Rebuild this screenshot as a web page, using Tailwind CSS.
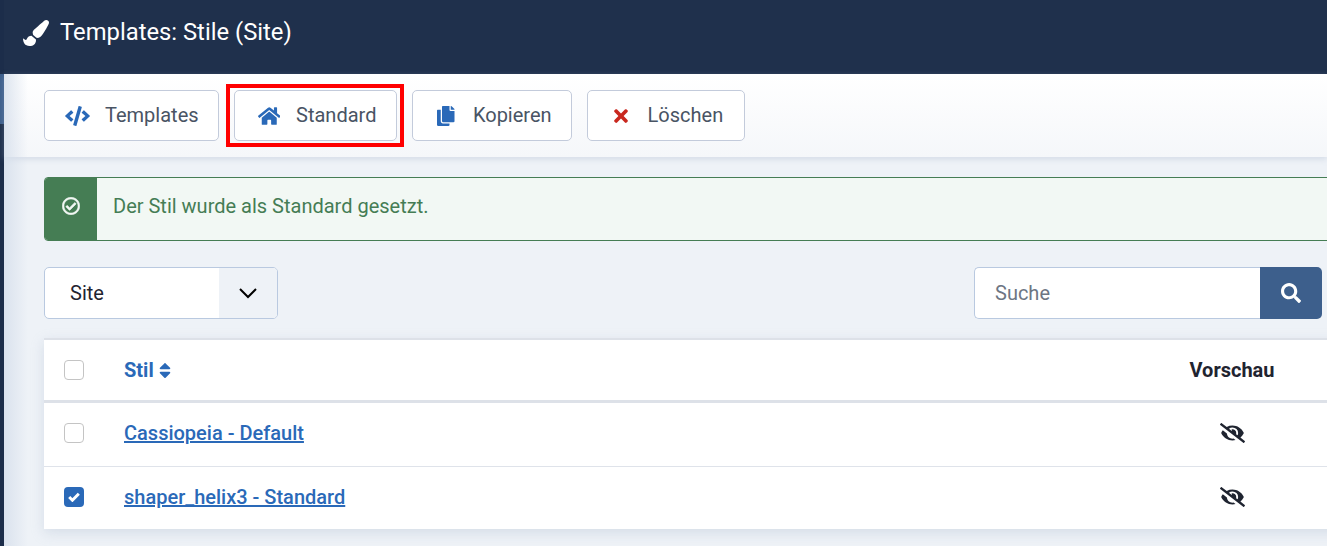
<!DOCTYPE html>
<html lang="de">

<head>
  <meta charset="UTF-8">
  <meta name="viewport" content="width=device-width, initial-scale=1.0">
  <title>Templates: Stile (Site)</title>
  <script src="https://cdn.jsdelivr.net/npm/@tailwindcss/browser@4"></script>
</head>

<body class="h-[546px] overflow-hidden bg-[#eef2f7] font-['Roboto',sans-serif]">
  <div class="flex h-[546px] overflow-hidden">

    <!-- sidebar strip -->
    <div class="w-[4px] shrink-0 bg-[#1c2d4a] flex flex-col">
      <div class="h-[74px]"></div>
      <div class="h-[50px] bg-[#3d5f8c]"></div>
    </div>

    <div class="relative flex-1 min-w-0">
      <!-- header -->
      <header class="h-[74px] bg-[#1f304c] flex items-center pl-[19px] pb-[9px] gap-[11px] text-white">
        <svg class="w-[26px] h-[26px] fill-white" viewBox="0 0 512 512"><path d="M167.02 309.34c-40.12 2.58-76.53 17.86-97.19 72.3-2.35 6.21-8 9.98-14.59 9.98-11.11 0-45.46-27.67-55.25-34.35C0 439.62 37.93 512 128 512c75.86 0 128-43.77 128-120.19 0-3.11-.65-6.08-.97-9.13l-88.01-73.34zM457.89 0c-15.16 0-29.37 6.71-40.21 16.45C213.27 199.05 192 203.34 192 257.09c0 13.7 3.25 26.76 8.73 38.7l63.82 53.18c7.21 1.8 14.64 3.03 22.39 3.03 62.11 0 98.11-45.47 211.16-256.46 7.38-14.35 13.9-29.85 13.9-45.99C512 20.64 486 0 457.89 0z"/></svg>
        <h1 class="text-[23.8px] leading-none">Templates: Stile (Site)</h1>
      </header>

      <!-- toolbar -->
      <div class="relative h-[83px] bg-gradient-to-b from-white to-[#f5f7fa] shadow-[0_2px_6px_rgba(160,175,200,0.35)] pl-[40px] pt-[16px] flex items-start gap-[15px] text-[20px] text-[#495464]">
        <button class="h-[51px] flex items-center gap-[15px] pl-[20px] pr-[19px] bg-white border border-[#c3cbdb] rounded-[5px]">
          <svg class="w-[25px] h-[20px] fill-[#2a69b8]" viewBox="0 0 640 512"><path d="M278.9 511.5l-61-17.7c-6.4-1.8-10-8.5-8.2-14.9L346.2 8.7c1.8-6.4 8.5-10 14.9-8.2l61 17.7c6.4 1.8 10 8.5 8.2 14.9L293.8 503.3c-1.9 6.4-8.5 10.1-14.9 8.2zm-114-112.2l43.5-46.4c4.6-4.9 4.3-12.7-.8-17.2L117 256l90.6-79.7c5.1-4.5 5.5-12.3.8-17.2l-43.5-46.4c-4.5-4.8-12.1-5.1-17-.5L3.8 247.2c-5.1 4.7-5.1 12.8 0 17.5l144.1 135.1c4.9 4.6 12.5 4.4 17-.5zm327.2.6l144.1-135.1c5.1-4.7 5.1-12.8 0-17.5L492.1 112.1c-4.8-4.5-12.4-4.3-17 .5L431.6 159c-4.6 4.9-4.3 12.7.8 17.2L523 256l-90.6 79.7c-5.1 4.5-5.5 12.3-.8 17.2l43.5 46.4c4.5 4.9 12.1 5.1 17 .6z"/></svg>
          <span class="-mt-[2px]">Templates</span>
        </button>
        <div class="relative">
          <button class="h-[51px] flex items-center gap-[16px] pl-[23px] pr-[20px] bg-white border border-[#c3cbdb] rounded-[5px]">
            <svg class="w-[22.5px] h-[20px] fill-[#2a69b8]" viewBox="0 0 576 512"><path d="M280.37 148.26L96 300.11V464a16 16 0 0 0 16 16l112.06-.29a16 16 0 0 0 15.92-16V368a16 16 0 0 1 16-16h64a16 16 0 0 1 16 16v95.64a16 16 0 0 0 16 16.05L464 480a16 16 0 0 0 16-16V300L295.67 148.26a12.19 12.19 0 0 0-15.3 0zM571.6 251.47L488 182.56V44.05a12 12 0 0 0-12-12h-56a12 12 0 0 0-12 12v72.61L318.47 43a48 48 0 0 0-61 0L4.34 251.47a12 12 0 0 0-1.6 16.9l25.5 31A12 12 0 0 0 45.15 301l235.22-193.74a12.19 12.19 0 0 1 15.3 0L530.9 301a12 12 0 0 0 16.9-1.6l25.5-31a12 12 0 0 0-1.7-16.93z"/></svg>
            <span class="-mt-[2px]">Standard</span>
          </button>
          <!-- red annotation box -->
          <div class="absolute -left-[8px] -top-[6px] -right-[7px] -bottom-[6px] border-[4px] border-[#ff0000] pointer-events-none"></div>
        </div>
        <button class="h-[51px] flex items-center gap-[18px] pl-[24px] pr-[19px] bg-white border border-[#c3cbdb] rounded-[5px]">
          <svg class="w-[17.5px] h-[20px] fill-[#2a69b8]" viewBox="0 0 448 512"><path d="M320 448v40c0 13.255-10.745 24-24 24H24c-13.255 0-24-10.745-24-24V120c0-13.255 10.745-24 24-24h72v296c0 30.879 25.121 56 56 56h168zm0-344V0H152c-13.255 0-24 10.745-24 24v368c0 13.255 10.745 24 24 24h272c13.255 0 24-10.745 24-24V128H344c-13.2 0-24-10.8-24-24zm120.971-31.029L375.029 7.029A24 24 0 0 0 358.059 0H352v96h96v-6.059a24 24 0 0 0-7.029-16.97z"/></svg>
          <span class="-mt-[2px]">Kopieren</span>
        </button>
        <button class="h-[51px] flex items-center gap-[20px] pl-[26px] pr-[21px] bg-white border border-[#c3cbdb] rounded-[5px]">
          <svg class="w-[14px] h-[20px] fill-[#c9281f]" viewBox="0 0 352 512"><path d="M242.72 256l100.07-100.07c12.28-12.28 12.28-32.19 0-44.48l-22.24-22.24c-12.28-12.28-32.19-12.28-44.48 0L176 189.28 75.93 89.21c-12.28-12.28-32.19-12.28-44.48 0L9.21 111.45c-12.28 12.28-12.28 32.19 0 44.48L109.28 256 9.21 356.07c-12.28 12.28-12.28 32.19 0 44.48l22.24 22.24c12.28 12.28 32.2 12.28 44.48 0L176 322.72l100.07 100.07c12.28 12.28 32.2 12.28 44.48 0l22.24-22.24c12.28-12.28 12.28-32.19 0-44.48L242.72 256z"/></svg>
          <span class="-mt-[2px]">Löschen</span>
        </button>
      </div>

      <main class="pl-[40px] pt-[20px]">
        <!-- success message -->
        <div class="w-[1300px] h-[64px] flex rounded-[4px] border border-[#457d54] bg-[#f2f8f4] overflow-hidden">
          <div class="w-[52px] shrink-0 pb-[6px] bg-[#457d54] flex items-center justify-center">
            <svg class="w-[18px] h-[18px] fill-[#f2f8f4] stroke-[#f2f8f4] stroke-[16px]" viewBox="0 0 512 512"><path d="M256 8C119.033 8 8 119.033 8 256s111.033 248 248 248 248-111.033 248-248S392.967 8 256 8zm0 48c110.532 0 200 89.451 200 200 0 110.532-89.451 200-200 200-110.532 0-200-89.451-200-200 0-110.532 89.451-200 200-200m140.204 130.267l-22.536-22.718c-4.667-4.705-12.265-4.736-16.97-.068L215.346 303.697l-59.792-60.277c-4.667-4.705-12.265-4.736-16.97-.069l-22.719 22.536c-4.705 4.667-4.736 12.265-.068 16.971l90.781 91.516c4.667 4.705 12.265 4.736 16.97.068l172.589-171.204c4.704-4.668 4.734-12.266.067-16.971z"/></svg>
          </div>
          <p class="pl-[16px] pb-[6px] self-center text-[20px] text-[#457d54]">Der Stil wurde als Standard gesetzt.</p>
        </div>

        <!-- filters -->
        <div class="mt-[26px] flex justify-between w-[1278px] text-[20px]">
          <div class="w-[234px] h-[52px] flex bg-white border border-[#b9c9e0] rounded-[5px] overflow-hidden">
            <div class="flex-1 pl-[25px] flex items-center text-[#1f2430]">Site</div>
            <div class="w-[58px] bg-[#eef2f7] flex items-center justify-center">
              <svg class="w-[18px] h-[11px] fill-none stroke-black stroke-[2px]" viewBox="0 0 18 11"><path d="M1 1l8 8 8-8"/></svg>
            </div>
          </div>
          <div class="w-[348px] h-[52px] flex">
            <div class="flex-1 pl-[20px] flex items-center bg-white border border-r-0 border-[#b9c9e0] rounded-l-[5px] text-[#6d7683]">Suche</div>
            <div class="w-[62px] bg-[#3d5f8c] rounded-r-[5px] flex items-center justify-center">
              <svg class="w-[20px] h-[20px] fill-white" viewBox="0 0 512 512"><path d="M505 442.7L405.3 343c-4.5-4.5-10.6-7-17-7H372c27.6-35.3 44-79.7 44-128C416 93.1 322.9 0 208 0S0 93.1 0 208s93.1 208 208 208c48.3 0 92.7-16.4 128-44v16.3c0 6.4 2.5 12.5 7 17l99.7 99.7c9.4 9.4 24.6 9.4 33.9 0l28.3-28.3c9.4-9.4 9.4-24.6.1-34zM208 336c-70.7 0-128-57.2-128-128 0-70.7 57.2-128 128-128 70.7 0 128 57.2 128 128 0 70.7-57.2 128-128 128z"/></svg>
            </div>
          </div>
        </div>

        <!-- styles table -->
        <div class="mt-[19px] w-[1300px] bg-white border-t-2 border-[#dde1e8] shadow-[0_4px_12px_rgba(160,175,200,0.3)] text-[20px]">
          <div class="h-[63px] flex items-center border-b-[3px] border-[#dde1e8] font-bold">
            <div class="w-[80px] pl-[20px]"><span class="block w-[20px] h-[20px] bg-white border border-[#c4c4c4] rounded-[4px]"></span></div>
            <div class="flex-1 flex items-center gap-[5px] text-[#2a69b8]">
              <span>Stil</span>
              <svg class="w-[12px] h-[19px] fill-[#2a69b8]" viewBox="0 0 320 512"><path d="M41 288h238c21.4 0 32.1 25.9 17 41L177 448c-9.4 9.4-24.6 9.4-33.9 0L24 329c-15.1-15.1-4.4-41 17-41zm255-105L177 64c-9.4-9.4-24.6-9.4-33.9 0L24 183c-15.1 15.1-4.4 41 17 41h238c21.4 0 32.1-25.9 17-41z"/></svg>
            </div>
            <div class="w-[224px] text-center text-[#1f2430]">Vorschau</div>
          </div>
          <div class="h-[64px] pb-[3px] flex items-center border-b border-[#dfe3ea] font-medium">
            <div class="w-[80px] pl-[20px]"><span class="block w-[20px] h-[20px] bg-white border border-[#c4c4c4] rounded-[4px]"></span></div>
            <a href="#" class="flex-1 text-[#2a69b8] underline">Cassiopeia - Default</a>
            <div class="w-[224px] flex justify-center">
              <svg class="w-[25px] h-[20px] fill-[#1f2430]" viewBox="0 0 640 512"><path d="M320 400c-75.85 0-137.25-58.71-142.9-133.11L72.2 185.82c-13.79 17.3-26.48 35.59-36.72 55.59a32.35 32.35 0 0 0 0 29.19C89.71 376.41 197.07 448 320 448c26.91 0 52.87-4 77.89-10.46L346 397.39a144.13 144.13 0 0 1-26 2.61zm313.82 58.1l-110.55-85.44a331.25 331.25 0 0 0 81.25-102.07 32.35 32.35 0 0 0 0-29.19C550.29 135.59 442.93 64 320 64a308.15 308.15 0 0 0-147.32 37.7L45.46 3.37A16 16 0 0 0 23 6.18L3.37 31.45A16 16 0 0 0 6.18 53.9l588.36 454.73a16 16 0 0 0 22.46-2.81l19.64-25.27a16 16 0 0 0-2.82-22.45zm-183.72-142l-39.3-30.38A94.75 94.75 0 0 0 416 256a94.76 94.76 0 0 0-121.31-92.21A47.65 47.65 0 0 1 304 192a46.64 46.64 0 0 1-1.54 10l-73.61-56.89A142.31 142.31 0 0 1 320 112a143.92 143.92 0 0 1 144 144c0 21.63-5.29 41.79-13.9 60.11z"/></svg>
            </div>
          </div>
          <div class="h-[62px] pb-[2px] flex items-center font-medium">
            <div class="w-[80px] pl-[20px]">
              <span class="flex items-center justify-center w-[20px] h-[20px] bg-[#2a69b8] rounded-[4px]">
                <svg class="w-[12px] h-[10px] fill-none stroke-white stroke-[3px]" viewBox="0 0 12 10"><path d="M1.2 5l3.2 3.2 6.4-6.4"/></svg>
              </span>
            </div>
            <a href="#" class="flex-1 text-[#2a69b8] underline">shaper_helix3 - Standard</a>
            <div class="w-[224px] flex justify-center">
              <svg class="w-[25px] h-[20px] fill-[#1f2430]" viewBox="0 0 640 512"><path d="M320 400c-75.85 0-137.25-58.71-142.9-133.11L72.2 185.82c-13.79 17.3-26.48 35.59-36.72 55.59a32.35 32.35 0 0 0 0 29.19C89.71 376.41 197.07 448 320 448c26.91 0 52.87-4 77.89-10.46L346 397.39a144.13 144.13 0 0 1-26 2.61zm313.82 58.1l-110.55-85.44a331.25 331.25 0 0 0 81.25-102.07 32.35 32.35 0 0 0 0-29.19C550.29 135.59 442.93 64 320 64a308.15 308.15 0 0 0-147.32 37.7L45.46 3.37A16 16 0 0 0 23 6.18L3.37 31.45A16 16 0 0 0 6.18 53.9l588.36 454.73a16 16 0 0 0 22.46-2.81l19.64-25.27a16 16 0 0 0-2.82-22.45zm-183.72-142l-39.3-30.38A94.75 94.75 0 0 0 416 256a94.76 94.76 0 0 0-121.31-92.21A47.65 47.65 0 0 1 304 192a46.64 46.64 0 0 1-1.54 10l-73.61-56.89A142.31 142.31 0 0 1 320 112a143.92 143.92 0 0 1 144 144c0 21.63-5.29 41.79-13.9 60.11z"/></svg>
            </div>
          </div>
        </div>
      </main>

      <!-- soft shadow from the sidebar -->
      <div class="absolute left-0 top-[74px] bottom-0 w-[24px] bg-gradient-to-r from-[#d5deeb]/80 to-transparent pointer-events-none"></div>
    </div>
  </div>
</body>

</html>
